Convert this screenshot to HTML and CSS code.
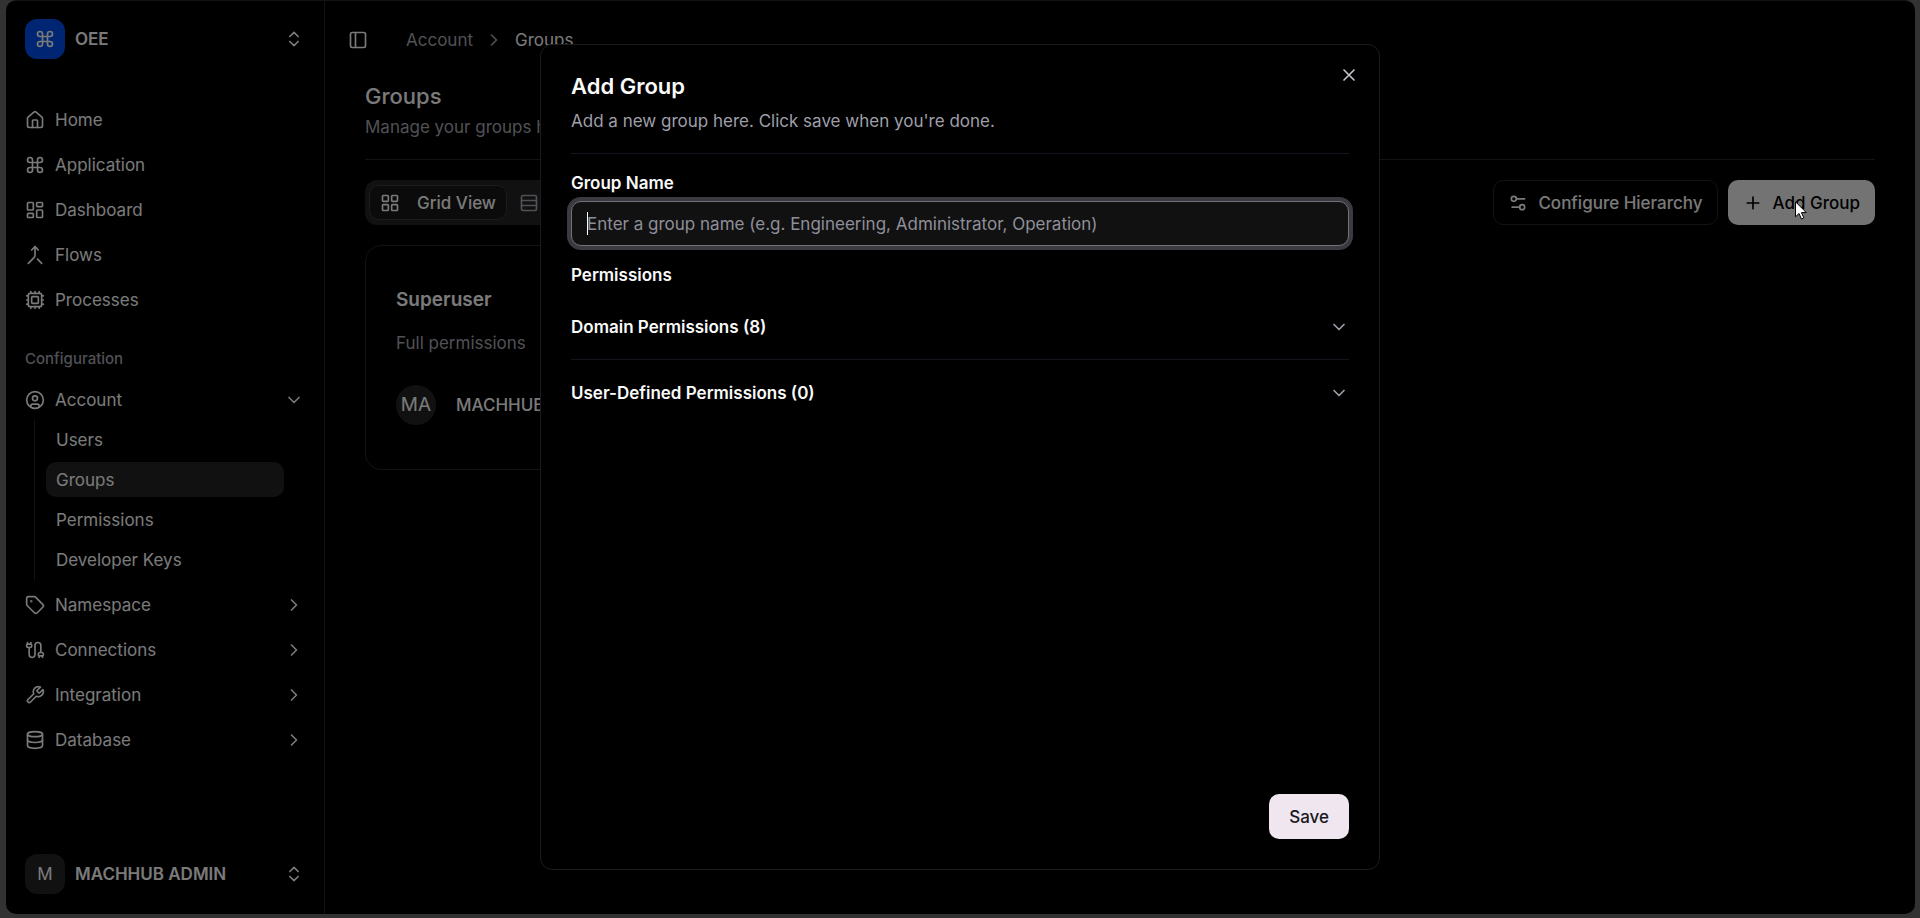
FILE: index.html
```html
<!DOCTYPE html>
<html lang="en">
<head>
    <meta charset="UTF-8">
    <meta name="viewport" content="width=device-width, initial-scale=1">
    <title>Groups</title>
    <link rel="stylesheet" href="styles.css">
</head>
<body>
<svg class="sprite" aria-hidden="true">
    <symbol id="command" viewBox="0 0 24 24"><path d="M15 6v12a3 3 0 1 0 3-3H6a3 3 0 1 0 3 3V6a3 3 0 1 0-3 3h12a3 3 0 1 0-3-3"/></symbol>
    <symbol id="updown" viewBox="0 0 24 24"><path d="m7 15 5 5 5-5M7 9l5-5 5 5"/></symbol>
    <symbol id="right" viewBox="0 0 24 24"><path d="m9 18 6-6-6-6"/></symbol>
    <symbol id="down" viewBox="0 0 24 24"><path d="m6 9 6 6 6-6"/></symbol>
</svg>

<div class="app">
    <aside class="sidebar">
        <button class="team" type="button">
            <span class="logo"><svg class="icon"><use href="#command"/></svg></span>
            <span class="name">OEE</span>
            <svg class="icon"><use href="#updown"/></svg>
        </button>

        <nav class="menu">
            <a class="item" href="#"><svg class="icon" viewBox="0 0 24 24"><path d="M15 21v-8a1 1 0 0 0-1-1h-4a1 1 0 0 0-1 1v8"/><path d="M3 10a2 2 0 0 1 .709-1.528l7-5.999a2 2 0 0 1 2.582 0l7 5.999A2 2 0 0 1 21 10v9a2 2 0 0 1-2 2H5a2 2 0 0 1-2-2z"/></svg><span>Home</span></a>
            <a class="item" href="#"><svg class="icon"><use href="#command"/></svg><span>Application</span></a>
            <a class="item" href="#"><svg class="icon" viewBox="0 0 24 24"><rect x="3" y="3" width="7" height="9" rx="1"/><rect x="14" y="3" width="7" height="5" rx="1"/><rect x="14" y="12" width="7" height="9" rx="1"/><rect x="3" y="16" width="7" height="5" rx="1"/></svg><span>Dashboard</span></a>
            <a class="item" href="#"><svg class="icon" viewBox="0 0 24 24"><path d="m8 6 4-4 4 4"/><path d="M12 2v10.3a4 4 0 0 1-1.172 2.872L4 22"/><path d="m20 22-5-5"/></svg><span>Flows</span></a>
            <a class="item" href="#"><svg class="icon" viewBox="0 0 24 24"><rect x="4" y="4" width="16" height="16" rx="2"/><rect x="8" y="8" width="8" height="8" rx="1"/><path d="M12 20v2M12 2v2M17 20v2M17 2v2M2 12h2M2 17h2M2 7h2M20 12h2M20 17h2M20 7h2M7 20v2M7 2v2"/></svg><span>Processes</span></a>
        </nav>

        <h2 class="menu-label">Configuration</h2>
        <nav class="menu">
            <button class="item" type="button"><svg class="icon" viewBox="0 0 24 24"><circle cx="12" cy="12" r="10"/><circle cx="12" cy="10" r="3"/><path d="M7 20.662V19a2 2 0 0 1 2-2h6a2 2 0 0 1 2 2v1.662"/></svg><span>Account</span><svg class="icon"><use href="#down"/></svg></button>
            <div class="submenu">
                <a href="#">Users</a>
                <a class="on" href="#">Groups</a>
                <a href="#">Permissions</a>
                <a href="#">Developer Keys</a>
            </div>
            <button class="item" type="button"><svg class="icon" viewBox="0 0 24 24"><path d="M12.586 2.586A2 2 0 0 0 11.172 2H4a2 2 0 0 0-2 2v7.172a2 2 0 0 0 .586 1.414l8.704 8.704a2.426 2.426 0 0 0 3.42 0l6.58-6.58a2.426 2.426 0 0 0 0-3.42z"/><circle cx="7.5" cy="7.5" r=".5"/></svg><span>Namespace</span><svg class="icon"><use href="#right"/></svg></button>
            <button class="item" type="button"><svg class="icon" viewBox="0 0 24 24"><path d="M17 21v-2a1 1 0 0 1-1-1v-1a2 2 0 0 1 2-2h2a2 2 0 0 1 2 2v1a1 1 0 0 1-1 1"/><path d="M19 15V6.5a1 1 0 0 0-7 0v11a1 1 0 0 1-7 0V9"/><path d="M21 21v-2h-4M3 5h4V3"/><path d="M7 5a1 1 0 0 1 1 1v1a2 2 0 0 1-2 2H4a2 2 0 0 1-2-2V6a1 1 0 0 1 1-1V3"/></svg><span>Connections</span><svg class="icon"><use href="#right"/></svg></button>
            <button class="item" type="button"><svg class="icon" viewBox="0 0 24 24"><path d="M14.7 6.3a1 1 0 0 0 0 1.4l1.6 1.6a1 1 0 0 0 1.4 0l3.77-3.77a6 6 0 0 1-7.94 7.94l-6.91 6.91a2.12 2.12 0 0 1-3-3l6.91-6.91a6 6 0 0 1 7.94-7.94l-3.76 3.76z"/></svg><span>Integration</span><svg class="icon"><use href="#right"/></svg></button>
            <button class="item" type="button"><svg class="icon" viewBox="0 0 24 24"><ellipse cx="12" cy="5" rx="9" ry="3"/><path d="M3 5v14a9 3 0 0 0 18 0V5"/><path d="M3 12a9 3 0 0 0 18 0"/></svg><span>Database</span><svg class="icon"><use href="#right"/></svg></button>
        </nav>

        <button class="team user" type="button">
            <span class="logo">M</span>
            <span class="name">MACHHUB ADMIN</span>
            <svg class="icon"><use href="#updown"/></svg>
        </button>
    </aside>

    <main class="main">
        <header class="topbar">
            <button class="toggle" type="button" aria-label="Toggle sidebar"><svg class="icon" viewBox="0 0 24 24"><rect x="3" y="3" width="18" height="18" rx="2"/><path d="M9 3v18"/></svg></button>
            <a class="muted" href="#">Account</a>
            <svg class="icon muted"><use href="#right"/></svg>
            <span>Groups</span>
        </header>

        <section class="content">
            <div class="heading">
                <h1>Groups</h1>
                <p class="muted">Manage your groups here.</p>
            </div>
            <div class="toolbar">
                <div class="tabs">
                    <button class="tab on" type="button"><svg class="icon" viewBox="0 0 24 24"><rect x="3" y="3" width="7" height="7" rx="1"/><rect x="14" y="3" width="7" height="7" rx="1"/><rect x="14" y="14" width="7" height="7" rx="1"/><rect x="3" y="14" width="7" height="7" rx="1"/></svg>Grid View</button>
                    <button class="tab" type="button"><svg class="icon" viewBox="0 0 24 24"><rect x="3" y="3" width="18" height="18" rx="2"/><path d="M21 9H3M21 15H3"/></svg></button>
                </div>
                <button class="btn outline" type="button"><svg class="icon" viewBox="0 0 24 24"><path d="M20 7h-9M14 17H5"/><circle cx="17" cy="17" r="3"/><circle cx="7" cy="7" r="3"/></svg>Configure Hierarchy</button>
                <button class="btn add" type="button"><svg class="icon" viewBox="0 0 24 24"><path d="M5 12h14M12 5v14"/></svg>Add Group</button>
            </div>
            <div class="cards">
                <article class="card">
                    <h3>Superuser</h3>
                    <p class="muted">Full permissions</p>
                    <div class="member"><span class="avatar">MA</span><span>MACHHUB</span></div>
                </article>
            </div>
        </section>
    </main>
</div>

<div class="overlay">
    <form class="dialog" role="dialog" aria-labelledby="title">
        <button class="close" type="button" aria-label="Close"><svg class="icon" viewBox="0 0 24 24"><path d="M18 6 6 18M6 6l12 12"/></svg></button>
        <header class="dialog-head">
            <h2 id="title">Add Group</h2>
            <p>Add a new group here. Click save when you're done.</p>
        </header>
        <label for="groupName">Group Name</label>
        <div class="field">
            <input id="groupName" type="text" autocomplete="off" placeholder="Enter a group name (e.g. Engineering, Administrator, Operation)">
            <span class="caret"></span>
        </div>
        <h3>Permissions</h3>
        <div class="accordion">
            <button type="button">Domain Permissions (8)<svg class="icon"><use href="#down"/></svg></button>
            <button type="button">User-Defined Permissions (0)<svg class="icon"><use href="#down"/></svg></button>
        </div>
        <footer><button class="btn save" type="submit">Save</button></footer>
    </form>
    <svg class="pointer" viewBox="0 0 12 19" aria-hidden="true"><path d="M.5.8v15l3.5-3.3 2.5 5.5 2.4-1.1-2.5-5.3h4.9z"/></svg>
</div>
</body>
</html>
```
FILE: styles.css
```css
*{
    margin: 0;
    padding: 0;
    box-sizing: border-box;
}
body{
    height: 100vh;
    padding: 0 5px 4px 6px;
    overflow: hidden;
    background: #646464;
    color: #f4f4f5;
    font: 400 17px/24px Inter, "Liberation Sans", sans-serif;
}
a{
    color: inherit;
    text-decoration: none;
}
button{
    border: 0;
    background: none;
    color: inherit;
    font: inherit;
    text-align: left;
}
.sprite{
    position: absolute;
    width: 0;
    height: 0;
}
.icon{
    flex: none;
    width: 20px;
    height: 20px;
    fill: none;
    stroke: currentColor;
    stroke-width: 2;
    stroke-linecap: round;
    stroke-linejoin: round;
}
.muted{
    color: #a1a1aa;
}
.app{
    display: flex;
    height: 100%;
    border-top: 1px solid #262626;
    border-radius: 10px;
    background: #000;
    overflow: hidden;
}

/* sidebar */
.sidebar{
    display: flex;
    flex-direction: column;
    flex: none;
    width: 319px;
    padding: 8px 10px 10px 9px;
    border-right: 1px solid #262626;
}
.team{
    display: flex;
    align-items: center;
    gap: 10px;
    padding: 10px;
    margin-bottom: 31px;
    font-weight: 600;
}
.logo{
    display: flex;
    align-items: center;
    justify-content: center;
    width: 40px;
    height: 40px;
    border-radius: 12px;
    background: #004ce6;
    font-weight: 400;
}
.name{
    flex: 1;
}
.menu{
    display: flex;
    flex-direction: column;
    gap: 5px;
}
.item{
    display: flex;
    align-items: center;
    gap: 10px;
    height: 40px;
    padding: 0 10px;
}
.item span{
    flex: 1;
}
.menu-label{
    padding: 27px 10px 9px;
    color: #a1a1aa;
    font-size: 15px;
    font-weight: 500;
}
.submenu{
    display: flex;
    flex-direction: column;
    gap: 5px;
    margin: -5px 30px 0 19px;
    padding: 2px 0 3px 11px;
    border-left: 1px solid #262626;
}
.submenu a{
    padding: 6px 10px 5px;
    border-radius: 10px;
}
.submenu .on{
    background: #222;
}
.user{
    margin: auto 0 0;
}
.user .logo{
    background: #222;
}

/* page */
.main{
    flex: 1;
    min-width: 0;
}
.topbar{
    display: flex;
    align-items: center;
    gap: 11px;
    height: 78px;
    padding: 0 23px;
}
.toggle{
    display: flex;
    margin-right: 27px;
}
.content{
    padding: 0 40px;
}
.heading{
    padding: 2px 0 20px;
    border-bottom: 1px solid #262626;
}
.heading h1{
    margin-bottom: 4px;
    font-size: 22px;
    line-height: 30px;
    font-weight: 500;
}
.toolbar{
    display: flex;
    gap: 10px;
    margin: 20px 0;
}
.tabs{
    display: flex;
    gap: 1px;
    margin-right: auto;
    padding: 5px 4px;
    border-radius: 12px;
    background: #222;
}
.tab{
    display: flex;
    align-items: center;
    gap: 17px;
    height: 35px;
    padding: 0 10px;
    border: 1px solid transparent;
    border-radius: 10px;
    color: #a1a1aa;
    font-weight: 500;
}
.tab.on{
    border-color: #2f3a40;
    background: #161616;
    color: #f4f4f5;
}
.btn{
    display: flex;
    align-items: center;
    gap: 10px;
    height: 45px;
    padding: 0 14px;
    border: 1px solid transparent;
    border-radius: 10px;
    font-weight: 500;
}
.outline{
    border-color: #262626;
}
.add{
    background: #e6e6e6;
    color: #000;
}
.cards{
    display: grid;
    grid-template-columns: repeat(4, 1fr);
    gap: 20px;
}
.card{
    padding: 42px 30px 44px;
    border: 1px solid #262626;
    border-radius: 16px;
}
.card h3{
    margin-bottom: 19px;
    font-size: 19px;
    font-weight: 600;
}
.member{
    display: flex;
    align-items: center;
    gap: 20px;
    margin-top: 30px;
    font-weight: 500;
}
.avatar{
    width: 40px;
    border-radius: 50%;
    background: #222;
    font-size: 19px;
    font-weight: 400;
    line-height: 40px;
    text-align: center;
}

/* dialog */
.overlay{
    position: fixed;
    inset: 0;
    display: flex;
    justify-content: center;
    padding: 44px 20px 48px;
    background: rgba(0, 0, 0, .5);
}
.dialog{
    position: relative;
    display: flex;
    flex-direction: column;
    width: 100%;
    max-width: 840px;
    padding: 30px;
    border: 1px solid #1c1c20;
    border-radius: 12px;
    background: #000;
    color: #fafafa;
}
.close{
    position: absolute;
    top: 20px;
    right: 20px;
    display: flex;
    color: #c4c4c8;
}
.dialog-head{
    margin-bottom: 20px;
    padding-bottom: 20px;
    border-bottom: 1px solid #14141c;
}
.dialog-head h2{
    margin-bottom: 12px;
    font-size: 22px;
    line-height: 22px;
    font-weight: 600;
}
.dialog-head p{
    color: #9f9fa9;
}
.dialog label,
.dialog h3{
    font-size: 17px;
    line-height: 18px;
    font-weight: 600;
}
.field{
    position: relative;
    margin: 9px 0 20px;
}
.field input{
    width: 100%;
    height: 45px;
    padding: 0 15px;
    border: 1px solid #71717a;
    border-radius: 10px;
    outline: 0;
    background: #111;
    box-shadow: 0 0 0 4px #3a3a41;
    color: inherit;
    font: inherit;
}
.field input::placeholder{
    color: #8f8f99;
    opacity: 1;
}
.caret{
    position: absolute;
    left: 16px;
    top: 11px;
    width: 1px;
    height: 23px;
    background: #fff;
}
.accordion{
    display: flex;
    flex-direction: column;
    margin-top: 10px;
}
.accordion button{
    display: flex;
    justify-content: space-between;
    align-items: center;
    height: 66px;
    font-weight: 600;
}
.accordion button:first-child{
    border-bottom: 1px solid #14141c;
}
.accordion .icon{
    color: #9f9fa9;
}
.dialog footer{
    display: flex;
    justify-content: flex-end;
    margin-top: auto;
}
.save{
    padding: 0 19px;
    background: #f0e6ef;
    color: #18181b;
}
.pointer{
    position: absolute;
    top: 201px;
    right: 113px;
    width: 12px;
    height: 19px;
    fill: #fff;
    stroke: #000;
}
```
